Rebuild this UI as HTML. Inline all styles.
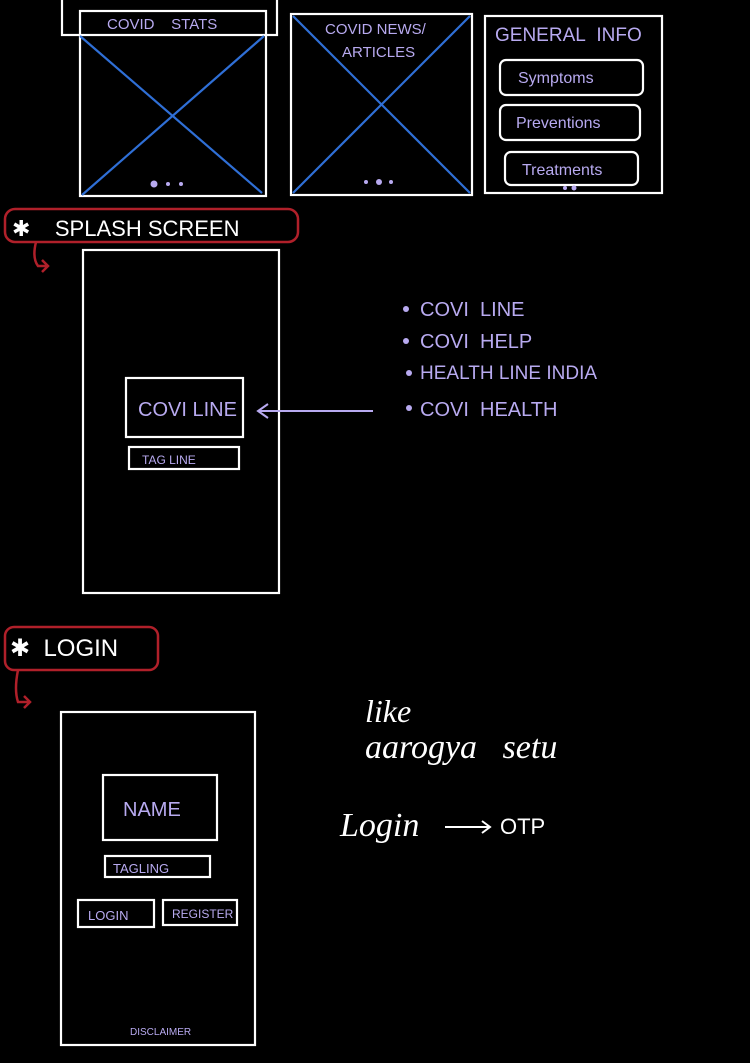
<!DOCTYPE html>
<html><head><meta charset="utf-8"><style>
html,body{margin:0;padding:0;background:#000;width:750px;height:1063px;overflow:hidden}
svg{display:block}
.l{fill:#b8aaf0;font-family:"Liberation Sans",sans-serif}
.w{fill:#fff;font-family:"Liberation Sans",sans-serif}
.h{fill:#fff;font-family:"Liberation Serif",serif;font-style:italic}
</style></head><body>
<svg width="750" height="1063" viewBox="0 0 750 1063" xmlns="http://www.w3.org/2000/svg">
<g fill="none" stroke="#fff" stroke-width="2.2">
<rect x="62" y="-5" width="215" height="40"/>
<rect x="80" y="11" width="186" height="185"/>
<rect x="291" y="14" width="181" height="181"/>
<rect x="485" y="16" width="177" height="177"/>
<rect x="500" y="60" width="143" height="35" rx="6"/>
<rect x="500" y="105" width="140" height="35" rx="6"/>
<rect x="505" y="152" width="133" height="33" rx="6"/>
<rect x="83" y="250" width="196" height="343"/>
<rect x="126" y="378" width="117" height="59"/>
<rect x="129" y="447" width="110" height="22"/>
<rect x="61" y="712" width="194" height="333"/>
<rect x="103" y="775" width="114" height="65"/>
<rect x="105" y="856" width="105" height="21"/>
<rect x="78" y="900" width="76" height="27"/>
<rect x="163" y="900" width="74" height="25"/>
</g>
<g stroke="#2f6fd6" stroke-width="2.2">
<line x1="80" y1="36" x2="262" y2="193"/><line x1="264" y1="36" x2="82" y2="195"/>
<line x1="293" y1="16" x2="470" y2="193"/><line x1="470" y1="16" x2="293" y2="193"/>
</g>
<g fill="#b8aaf0">
<circle cx="154" cy="184" r="3.5"/><circle cx="168" cy="184" r="2"/><circle cx="181" cy="184" r="2"/>
<circle cx="366" cy="182" r="2"/><circle cx="379" cy="182" r="3"/><circle cx="391" cy="182" r="2"/>
<circle cx="565" cy="188" r="2"/><circle cx="574" cy="188" r="2.5"/>
<circle cx="406" cy="309" r="3"/><circle cx="406" cy="341" r="3"/><circle cx="409" cy="373" r="3"/><circle cx="409" cy="408" r="3"/>
</g>
<g fill="none" stroke="#b0202a" stroke-width="2.5">
<rect x="5" y="209" width="293" height="33" rx="10"/>
<path d="M36 242 Q32 258 38 266 L48 266 M42 260 L48 266 L42 272"/>
<rect x="5" y="627" width="153" height="43" rx="9"/>
<path d="M18 670 Q14 690 18 702 L30 702 M24 696 L30 702 L24 708"/>
</g>
<path d="M373 411 L258 411 M268 404 L258 411 L268 418" stroke="#b8aaf0" stroke-width="2" fill="none"/>
<text class="l" x="107" y="29" font-size="15">COVID&#160;&#160;&#160;&#160;STATS</text>
<text class="l" x="325" y="34" font-size="15">COVID NEWS/</text>
<text class="l" x="342" y="57" font-size="15">ARTICLES</text>
<text class="l" x="495" y="41" font-size="19">GENERAL&#160;&#160;INFO</text>
<text class="l" x="518" y="83" font-size="16">Symptoms</text>
<text class="l" x="516" y="128" font-size="16">Preventions</text>
<text class="l" x="522" y="175" font-size="16">Treatments</text>
<text class="w" x="12" y="236" font-size="22">✱&#160;&#160;&#160;&#160;SPLASH SCREEN</text>
<text class="l" x="138" y="416" font-size="20">COVI LINE</text>
<text class="l" x="142" y="464" font-size="12">TAG LINE</text>
<text class="l" x="420" y="316" font-size="20">COVI&#160;&#160;LINE</text>
<text class="l" x="420" y="348" font-size="20">COVI&#160;&#160;HELP</text>
<text class="l" x="420" y="379" font-size="19">HEALTH LINE INDIA</text>
<text class="l" x="420" y="416" font-size="20">COVI&#160;&#160;HEALTH</text>
<text class="w" x="10" y="656" font-size="24">✱&#160;&#160;LOGIN</text>
<text class="l" x="123" y="816" font-size="20">NAME</text>
<text class="l" x="113" y="873" font-size="13">TAGLING</text>
<text class="l" x="88" y="920" font-size="13">LOGIN</text>
<text class="l" x="172" y="918" font-size="12">REGISTER</text>
<text class="l" x="130" y="1035" font-size="10">DISCLAIMER</text>
<text class="h" x="365" y="722" font-size="32">like</text>
<text class="h" x="365" y="758" font-size="34">aarogya&#160;&#160;&#160;setu</text>
<text class="h" x="340" y="836" font-size="34">Login</text>
<path d="M445 827 L490 827 M482 821 L490 827 L482 833" stroke="#fff" stroke-width="2" fill="none"/>
<text class="w" x="500" y="834" font-size="22">OTP</text>
</svg>
</body></html>
